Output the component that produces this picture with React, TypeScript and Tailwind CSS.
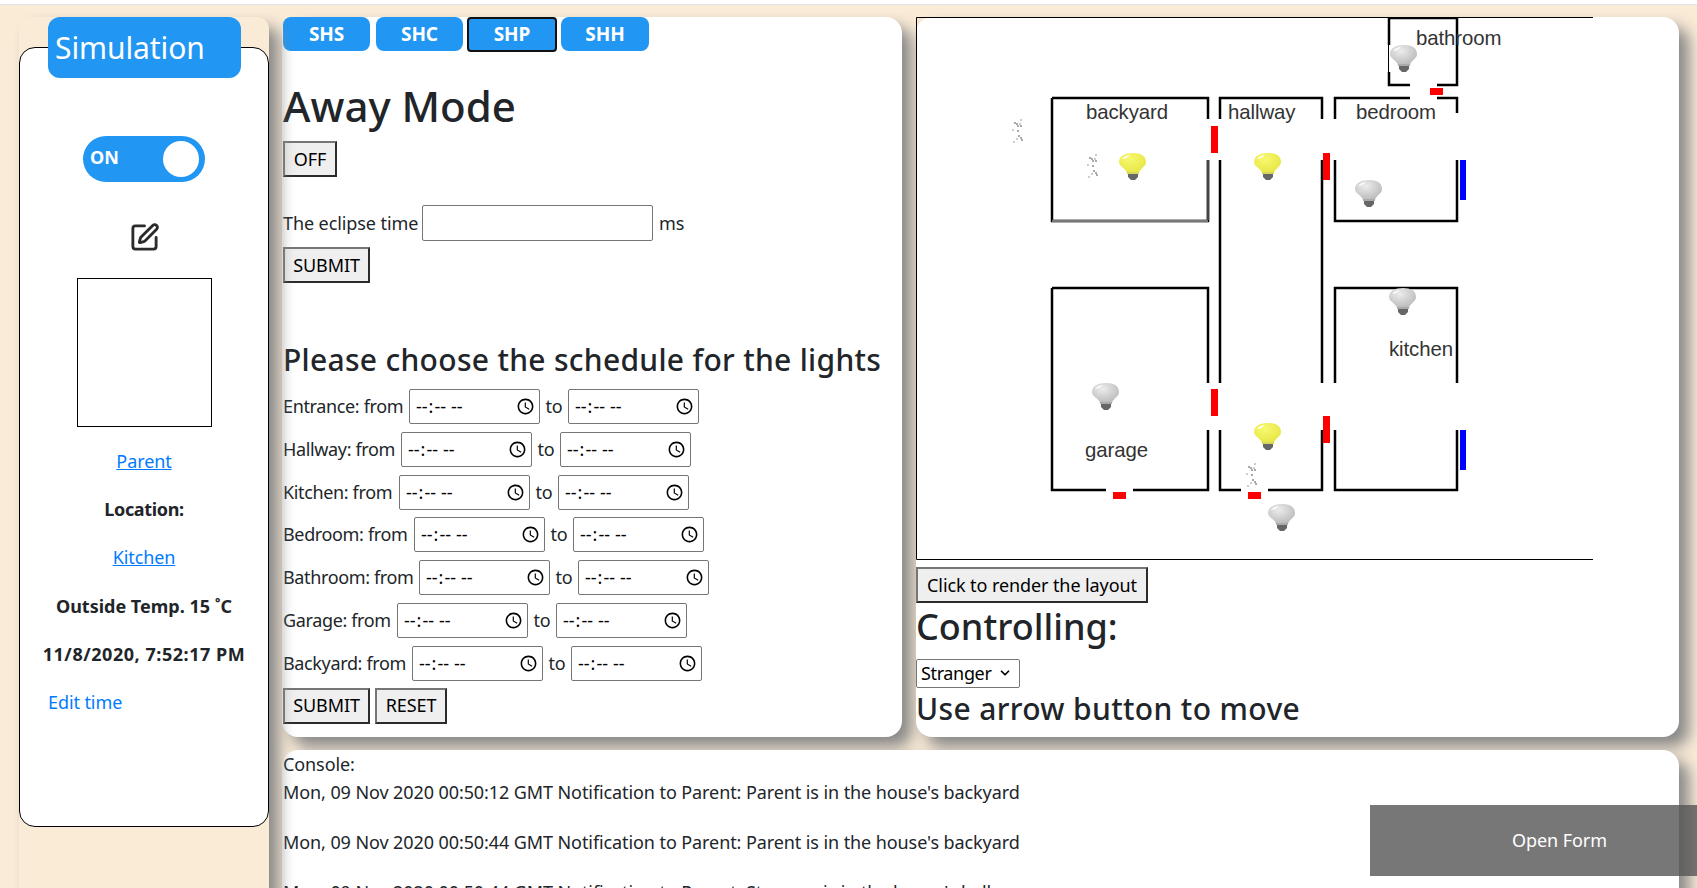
import { ChevronDown, SquarePen } from 'lucide-react';

const ROOMS = [
  { label: 'Entrance', first: 'w-[121px]' },
  { label: 'Hallway', first: 'w-[113px]' },
  { label: 'Kitchen', first: 'w-[111px]' },
  { label: 'Bedroom', first: 'w-[126px]' },
  { label: 'Bathroom', first: 'w-[131px]' },
  { label: 'Garage', first: 'w-[109px]' },
  { label: 'Backyard', first: 'w-[124px]' },
];

// wall segments of the floor plan, in page coordinates
const WALLS = [
  'M1052 98H1208V119M1208 160V221H1052V98',
  'M1220 119V98H1322V119M1322 160V383M1322 430V490H1268M1241 490H1220V430M1220 383V160',
  'M1335 119V98H1410M1437 98H1457V113M1457 160V221H1335V160',
  'M1389 45V18H1457V85H1437M1410 85H1389V72',
  'M1052 288H1208V383M1208 430V490H1133M1106 490H1052V288',
  'M1335 383V288H1457V383M1457 430V490H1335V430',
];

const DOORS = [
  { x: 1211, y: 126, w: 7, h: 27, c: '#ff0000' },
  { x: 1323, y: 153, w: 7, h: 27, c: '#ff0000' },
  { x: 1430, y: 88, w: 13, h: 7, c: '#ff0000' },
  { x: 1211, y: 389, w: 7, h: 27, c: '#ff0000' },
  { x: 1323, y: 416, w: 7, h: 27, c: '#ff0000' },
  { x: 1113, y: 492, w: 13, h: 7, c: '#ff0000' },
  { x: 1248, y: 492, w: 13, h: 7, c: '#ff0000' },
  { x: 1460, y: 160, w: 6, h: 40, c: '#0000ff' },
  { x: 1460, y: 430, w: 6, h: 40, c: '#0000ff' },
];

const BULBS = [
  { x: 1119, y: 153, on: true },
  { x: 1254, y: 153, on: true },
  { x: 1355, y: 180, on: false },
  { x: 1390, y: 45, on: false },
  { x: 1389, y: 288, on: false },
  { x: 1092, y: 383, on: false },
  { x: 1254, y: 423, on: true },
  { x: 1268, y: 504, on: false },
];

const PEOPLE = [
  { x: 1012, y: 119 },
  { x: 1087, y: 154 },
  { x: 1246, y: 463 },
];

const LABELS = [
  { t: 'backyard', x: 1086, y: 119 },
  { t: 'hallway', x: 1228, y: 119 },
  { t: 'bedroom', x: 1356, y: 119 },
  { t: 'bathroom', x: 1416, y: 45 },
  { t: 'kitchen', x: 1389, y: 356 },
  { t: 'garage', x: 1085, y: 457 },
];

const LOG = [
  "Mon, 09 Nov 2020 00:50:12 GMT Notification to Parent: Parent is in the house's backyard",
  "Mon, 09 Nov 2020 00:50:44 GMT Notification to Parent: Parent is in the house's backyard",
  "Mon, 09 Nov 2020 00:50:44 GMT Notification to Parent: Stranger is in the house's hallway",
];

const btn =
  'h-[36px] bg-[#efefef] text-black border-2 border-t-[#767676] border-l-[#767676] border-r-[#2b2b2b] border-b-[#2b2b2b]';

function Bulb({ x, y, on }: { x: number; y: number; on: boolean }) {
  return (
    <g transform={`translate(${x} ${y})`}>
      <path
        d="M0 9C0 3 6 0 14 0S27 3 27 9C27 14 21 15 20 20H8C7 15 0 14 0 9Z"
        fill={on ? 'url(#bulbOn)' : 'url(#bulbOff)'}
      />
      <path d="M3 6C5 3 8 2 11 2C9 4 7 6 3 6Z" fill="#ffffff" opacity="0.8" />
      <path d="M9 19H19V24L16 27H12L9 24Z" fill="#666666" />
      <rect x="8" y="19" width="12" height="2" fill={on ? '#d8d65a' : '#aaaaaa'} />
    </g>
  );
}

function Person({ x, y }: { x: number; y: number }) {
  const dots = [
    [8, 0], [2, 3], [4, 4], [7, 4], [5, 6], [8, 6], [0, 10], [5, 11], [6, 16], [4, 19], [8, 18], [9, 20], [1, 22],
  ];
  return (
    <g transform={`translate(${x} ${y})`} fill="#9a9a9a">
      {dots.map(([a, b], i) => (
        <rect key={i} x={a} y={b} width="2" height="2" opacity={i % 3 === 0 ? 0.5 : 0.85} />
      ))}
    </g>
  );
}

function FloorPlan() {
  return (
    <svg viewBox="916 17 677 543" className="block w-[677px] h-[543px]">
      <defs>
        <radialGradient id="bulbOn" cx="0.4" cy="0.3" r="0.8">
          <stop offset="0" stopColor="#f8f870" />
          <stop offset="1" stopColor="#e4e440" />
        </radialGradient>
        <radialGradient id="bulbOff" cx="0.4" cy="0.3" r="0.8">
          <stop offset="0" stopColor="#ececec" />
          <stop offset="1" stopColor="#b4b4b4" />
        </radialGradient>
      </defs>
      <path d="M1593 17.5H916.5V559.5H1593" fill="none" stroke="#000" />
      {WALLS.map((d) => (
        <path key={d} d={d} fill="none" stroke="#000" strokeWidth="2.5" />
      ))}
      {/* the lower backyard wall is washed out in the picture */}
      <path d="M1052 221H1208" fill="none" stroke="#777777" strokeWidth="2.5" />
      <path d="M1208 160V220" fill="none" stroke="#444444" strokeWidth="2.5" />
      <path d="M1388.5 45V72" fill="none" stroke="#000" strokeWidth="1" />
      {DOORS.map((d) => (
        <rect key={`${d.x}-${d.y}`} x={d.x} y={d.y} width={d.w} height={d.h} fill={d.c} />
      ))}
      {LABELS.map((l) => (
        <text key={l.t} x={l.x} y={l.y} fontSize="20.4" fontFamily="'Liberation Sans', Arial, sans-serif" fill="#333">
          {l.t}
        </text>
      ))}
      {BULBS.map((b) => (
        <Bulb key={`${b.x}-${b.y}`} {...b} />
      ))}
      {PEOPLE.map((p) => (
        <Person key={p.x} {...p} />
      ))}
    </svg>
  );
}

function TimeInput() {
  return (
    <input
      type="time"
      className="shrink-0 w-[131px] h-[35px] pl-[5px] pr-[4px] bg-white border border-[#767676] rounded-[2px] text-black text-[18px] [&::-webkit-calendar-picker-indicator]:w-[19px] [&::-webkit-calendar-picker-indicator]:h-[19px] [&::-webkit-calendar-picker-indicator]:m-0 [&::-webkit-calendar-picker-indicator]:p-0"
    />
  );
}

export default function App() {
  return (
    <div className="relative h-screen overflow-hidden bg-white pt-[4px] text-[18px] leading-[27px] text-[#212529] font-['Noto_Sans','Liberation_Sans',sans-serif] tracking-[-0.005em]">
      <div className="flex h-full bg-[#faebd7] border-t border-[#dee2e6] pt-[12px] pl-[19px]">
        {/* Simulation sidebar */}
        <aside className="relative shrink-0 w-[250px] h-[900px] rounded-[12px] bg-[#faebd7] shadow-[10px_10px_15px_#888888]">
          <div className="absolute top-[30px] left-0 w-full h-[780px] bg-white border border-black rounded-[16px]" />
          <div className="relative flex flex-col items-center">
            <div className="self-start ml-[29px] w-[193px] h-[61px] pl-[7px] pt-[2px] rounded-[12px] bg-[#2196f3] text-white text-[30px] leading-[58px]">
              Simulation
            </div>
            <div className="mt-[58px] flex items-center justify-between w-[122px] h-[46px] pl-[7px] pr-[6px] rounded-full bg-[#2196f3]">
              <span className="-mt-[3px] text-white font-bold">ON</span>
              <span className="w-[36px] h-[36px] rounded-full bg-white" />
            </div>
            <SquarePen className="mt-[40px] w-[31px] h-[31px] text-[#2b2b2b]" strokeWidth={2.2} />
            <div className="mt-[25px] w-[135px] h-[149px] border border-black bg-white" />
            <a className="mt-[21px] text-[#007bff] underline">Parent</a>
            <p className="mt-[21px] font-bold tracking-[-0.02em]">Location:</p>
            <a className="mt-[21px] text-[#007bff] underline">Kitchen</a>
            <p className="mt-[22px] font-bold tracking-normal">Outside Temp. 15 ˚C</p>
            <p className="mt-[21px] font-bold tracking-[0.03em]">11/8/2020, 7:52:17 PM</p>
            <a className="self-start ml-[29px] mt-[21px] text-[#007bff]">Edit time</a>
          </div>
        </aside>

        <div className="ml-[13px] flex w-[1397px] shrink-0 flex-col gap-[13px]">
          <div className="flex gap-[14px]">
            {/* Away mode form */}
            <section className="w-[620px] h-[720px] pl-px rounded-[16px] bg-white shadow-[10px_10px_15px_#888888]">
              <div className="flex items-start gap-[6px] text-[19px]">
                <button className="w-[87px] h-[34px] rounded-[8px] bg-[#2196f3] text-white font-bold">SHS</button>
                <button className="w-[87px] h-[34px] rounded-[8px] bg-[#2196f3] text-white font-bold">SHC</button>
                <button className="-ml-[2px] w-[90px] h-[35px] rounded-[4px] bg-[#2196f3] text-white font-bold border-2 border-[#111]">SHP</button>
                <button className="-ml-[2px] w-[88px] h-[34px] rounded-[8px] bg-[#2196f3] text-white font-bold">SHH</button>
              </div>
              <h1 className="mt-[30px] text-[42px] leading-[48px] font-medium tracking-normal">Away Mode</h1>
              <button className={`mt-[11px] block w-[54px] ${btn}`}>OFF</button>
              <div className="mt-[28px] flex items-center gap-[5px]">
                <span className="w-[134px] whitespace-nowrap">The eclipse time</span>
                <input className="w-[231px] h-[36px] border border-[#767676] rounded-[2px] bg-white" />
                <span className="ml-[1px]">ms</span>
              </div>
              <button className={`mt-[6px] block w-[87px] ${btn}`}>SUBMIT</button>
              <h3 className="mt-[60px] text-[30px] leading-[34px] font-medium tracking-[0.01em] whitespace-nowrap">Please choose the schedule for the lights</h3>
              <form className="mt-[12px] flex flex-col gap-[7.8px]">
                {ROOMS.map((r) => (
                  <div key={r.label} className="flex items-center gap-[5px]">
                    <span className={`${r.first} shrink-0 whitespace-nowrap tracking-[-0.02em]`}>{r.label}: from</span>
                    <TimeInput />
                    <span className="w-[18px] text-center">to</span>
                    <TimeInput />
                  </div>
                ))}
                <div className="-mt-[1px] flex gap-[5px]">
                  <button type="button" className={`w-[87px] ${btn}`}>SUBMIT</button>
                  <button type="button" className={`w-[72px] ${btn}`}>RESET</button>
                </div>
              </form>
            </section>

            {/* House layout */}
            <section className="w-[763px] h-[720px] rounded-[16px] bg-white shadow-[10px_10px_15px_#888888]">
              <FloorPlan />
              <button className={`mt-[7px] block w-[232px] ${btn}`}>Click to render the layout</button>
              <h2 className="mt-[2px] text-[36px] leading-[43px] font-medium tracking-normal">Controlling:</h2>
              <div className="relative mt-[11px] w-[104px]">
                <select className="block w-full h-[29px] px-[4px] appearance-none border border-[#767676] rounded-[2px] bg-white text-black tracking-[-0.02em]">
                  <option>Stranger</option>
                </select>
                <ChevronDown className="absolute right-[8px] top-[7px] w-[14px] h-[14px] text-black" strokeWidth={3} />
              </div>
              <h3 className="mt-[3px] text-[30px] leading-[36px] font-medium tracking-[0.012em]">Use arrow button to move</h3>
            </section>
          </div>

          {/* Console */}
          <section className="h-[300px] pl-px rounded-[16px] bg-white shadow-[10px_10px_15px_#888888]">
            <p className="pt-[1px]">Console:</p>
            <div className="mt-px flex flex-col gap-[23px]">
              {LOG.map((line, i) => (
                <p key={i}>{line}</p>
              ))}
            </div>
          </section>
        </div>
      </div>

      <button className="absolute right-0 top-[805px] w-[327px] h-[71px] pl-[52px] bg-[#555555]/80 text-white">
        Open Form
      </button>
    </div>
  );
}
